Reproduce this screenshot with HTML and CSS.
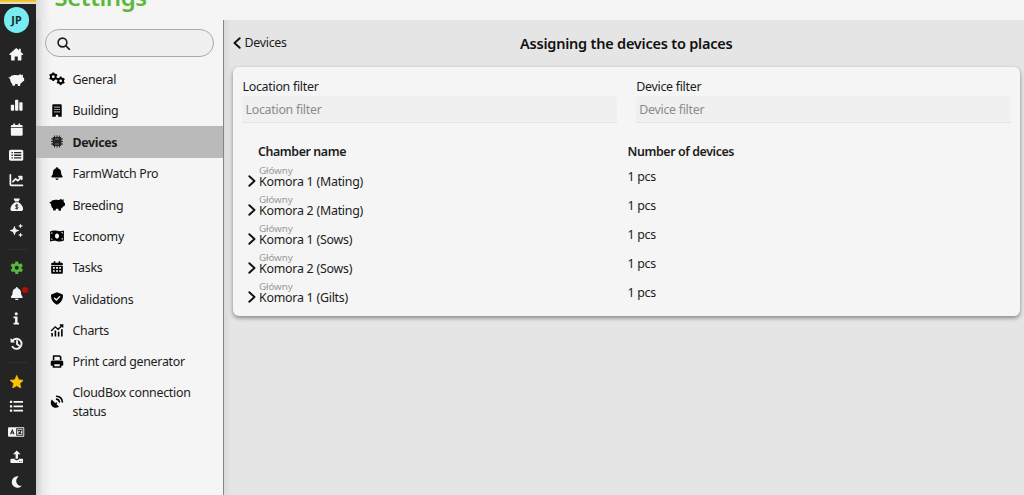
FILE: index.html
```html
<!DOCTYPE html>
<html lang="en">
<head>
<meta charset="utf-8">
<title>Settings</title>
<link rel="stylesheet" href="styles.css">
</head>
<body>
<svg class="sprite" aria-hidden="true">
  <symbol id="home" viewBox="0 0 16 16"><path d="M8 1 .5 7.8c-.5.5-.2 1 .4 1H2.3V14c0 .7.4 1 1 1h3v-4.500h3.400V15h3c.6 0 1-.3 1-1V8.800h1.400c.6 0 .9-.5.4-1L13 5.500V2h-2v1.700z"/></symbol>
  <symbol id="pig" viewBox="0 0 16 12"><path d="M.1 3.200C1 3.700 1.500 3.500 2 3 3 1.600 5 .9 7 1.100c1.500.1 2.600.2 3.600-.1L12.200 0l.7 1.200L14.800.6l-.3 1.900c.4.5.6 1 .7 1.500l.8.3v2.400l-1.500.9c-.6 1-1.500 1.600-2.300 1.900L11.800 12H9.700l-.5-1.900H7L6.500 11.800H4.300L3.900 9.700C2.800 8.900 2.100 7.400 1.900 5.500c-.1-.5-.4-.7-.8-.9C.5 4.300.2 3.800.1 3.200z"/></symbol>
  <symbol id="bars" viewBox="0 0 16 16"><rect x="1" y="8" width="3.900" height="7" rx="1"/><rect x="6" y="2" width="3.900" height="13" rx="1"/><rect x="11" y="5" width="3.900" height="10" rx="1"/></symbol>
  <symbol id="calendar" viewBox="0 0 16 16"><path d="M4 .5h2v2h4v-2h2v2h1.500c.8 0 1.500.6 1.500 1.500v1H1V4c0-.9.7-1.500 1.500-1.500H4zM1 6h14v7.500c0 .9-.7 1.500-1.500 1.500h-11C1.700 15 1 14.400 1 13.500z"/></symbol>
  <symbol id="listbox" viewBox="0 0 16 14"><path fill-rule="evenodd" d="M2 1h12c1.100 0 2 .8 2 1.800v8.400c0 1-.9 1.800-2 1.800H2c-1.100 0-2-.8-2-1.800V2.800C0 1.800.9 1 2 1zm.7 2.500v1.300h1.500V3.500zm2.800 0v1.300h8V3.500zM2.700 6.300v1.400h1.500V6.300zm2.800 0v1.400h8V6.300zM2.700 9.200v1.300h1.500V9.200zm2.800 0v1.300h8V9.200z"/></symbol>
  <symbol id="line" viewBox="0 0 16 16"><path class="stroke" d="M1.500 2v10.500q0 1.200 1.200 1.200H15M4.300 9.500l3-3 2.500 2L14 4.200M11 4h3v3"/></symbol>
  <symbol id="bag" viewBox="0 0 16 16"><path fill-rule="evenodd" d="M5 .5h6c.6 0 .8.5.5 1L10 4H6L4.500 1.500C4.200 1 4.400.5 5 .5zM6 5h4c3.500 2.300 5.500 5 5.500 8 0 1.700-1 2.500-2.500 2.500H3C1.500 15.500.5 14.700.5 13c0-3 2-5.700 5.500-8z"/><path class="cut" d="M9.800 8.500Q8 7.700 6.800 8.500c-1 1 0 1.600 1.200 1.800s2.200.8 1.300 1.900Q8 13 6.200 12.200M8 7v6.500"/></symbol>
  <symbol id="spark" viewBox="0 0 16 16"><path d="M6 3l1.600 3.800L11.500 8.400 7.600 10 6 13.900 4.400 10 .5 8.400l3.900-1.600zM12.700.5l.8 2 2 .8-2 .8-.8 2-.8-2-2-.8 2-.8zM12.700 10.500l.8 2 2 .8-2 .8-.8 1.900-.8-1.900-2-.8 2-.8z"/></symbol>
  <symbol id="gear" viewBox="0 0 16 16"><circle cx="8" cy="8" r="4" fill="none" stroke="currentColor" stroke-width="3.200"/><path fill="none" stroke="currentColor" stroke-width="3.600" d="M8 .6v3M8 12.400v3M1.600 4.300l2.600 1.500M11.800 10.200l2.600 1.500M1.600 11.700l2.600-1.500M11.800 5.800l2.600-1.500"/></symbol>
  <symbol id="bell" viewBox="0 0 448 512"><path d="M224 0c-17.700 0-32 14.300-32 32V51.200C119 66 64 130.600 64 208v18.800c0 47-17.300 92.400-48.500 127.600l-7.400 8.300c-8.400 9.400-10.400 22.900-5.300 34.400S19.400 416 32 416H416c12.600 0 24-7.400 29.200-18.900s3.100-25-5.300-34.400l-7.400-8.300C401.300 319.200 384 273.900 384 226.800V208c0-77.400-55-142-128-156.800V32c0-17.700-14.300-32-32-32zm45.300 493.300c12-12 18.700-28.300 18.700-45.300H160c0 17 6.700 33.300 18.700 45.300s28.300 18.700 45.300 18.700 33.300-6.700 45.300-18.700z"/></symbol>
  <symbol id="info" viewBox="0 0 16 16"><circle cx="8" cy="3" r="1.700"/><path d="M5 6h4.400v7H11v2H5v-2h1.700V8H5z"/></symbol>
  <symbol id="history" viewBox="0 0 16 16"><path class="stroke bold" d="M3 4.300a6 6 0 1 1-.1 7.300M8.300 4.800v3.500l2.400 1.900"/><path d="M.7 1.300v5.300H6z"/></symbol>
  <symbol id="star" viewBox="2 1.500 20 20"><path stroke="currentColor" stroke-linejoin="round" d="M12 17.270 18.180 21l-1.640-7.030L22 9.240l-7.190-.61L12 2 9.190 8.630 2 9.240l5.460 4.730L5.820 21z"/></symbol>
  <symbol id="list" viewBox="0 0 16 16"><path d="M1 2h2.500v2.500H1zM5 2.300h10.500v1.900H5zM1 6.800h2.500v2.500H1zM5 7.100h10.500V9H5zM1 11.600h2.500v2.500H1zM5 11.900h10.500v1.900H5z"/></symbol>
  <symbol id="lang" viewBox="0 0 18 12"><rect y=".8" width="18" height="10.400" rx="1.300"/><path class="cut" d="M2.800 8.500 4.700 3.800l1.900 4.700M3.500 7h2.400M9.500 2.500h6.700v7H9.500zM10.700 4.400H15M12.900 3.500v1M11.200 8q2.800-1 3-3.500M11.500 5.500q1 2 3.200 2.500"/></symbol>
  <symbol id="upload" viewBox="0 0 16 16"><path d="M8 .5 12.500 5H9.400v5.500H6.600V5H3.500zM1.500 10.500h3.800c.2 1 1.200 1.500 2.700 1.500s2.500-.5 2.700-1.500h3.800c.6 0 1 .4 1 1v3c0 .6-.4 1-1 1h-13c-.6 0-1-.4-1-1v-3c0-.6.4-1 1-1z"/><path class="cut" d="M10.700 13.700h.9M12.800 13.700h.9"/></symbol>
  <symbol id="moon" viewBox="0 0 16 16"><path d="M8.800 1.500A6.800 6.800 0 1 0 14 12.800C8 13.700 4.800 6.200 10 2.200c.5-.3-.5-.7-1.200-.7z"/></symbol>
  <symbol id="gears" viewBox="0 0 16 13"><g fill="none" stroke="currentColor"><circle cx="4.300" cy="4.500" r="2.400" stroke-width="2"/><circle cx="11.700" cy="8.600" r="2.400" stroke-width="2"/><path stroke-width="1.900" d="M4.300.2v2M4.300 6.800v2M.6 2.300l1.700 1M6.300 5.700l1.700 1M.6 6.700l1.700-1M6.300 3.300l1.700-1M11.700 4.300v2M11.700 10.900v2M8 6.400l1.700 1M13.700 9.800l1.700 1M8 10.800l1.700-1M13.700 7.400l1.700-1"/></g></symbol>
  <symbol id="building" viewBox="0 0 14 16"><path fill-rule="evenodd" d="M2.600.3h8.800c.8 0 1.400.6 1.400 1.300v14H8.500v-2.500h-3v2.500H1.200v-14C1.200.9 1.800.3 2.600.3zM3.800 3v1.500h1.500V3zm2.500 0v1.500h1.500V3zm2.500 0v1.500h1.500V3zm-5 3v1.500h1.500V6zm2.500 0v1.500h1.500V6zm2.500 0v1.500h1.500V6zm-5 3v1.400h1.500V9zm2.500 0v1.400h1.500V9zm2.500 0v1.400h1.500V9z"/></symbol>
  <symbol id="chip" viewBox="0 0 16 16"><path fill="none" stroke="currentColor" stroke-width="1.300" d="M5 .7v14.600M8 .7v2m0 10.600v2M11 .7v14.600M.7 5h14.600M.7 8h2m10.600 0h2M.7 11h14.600"/><path fill-rule="evenodd" d="M4 2.500h8c.8 0 1.500.7 1.500 1.500v8c0 .8-.7 1.500-1.500 1.500H4c-.8 0-1.500-.7-1.500-1.500V4c0-.8.7-1.500 1.500-1.500zm.4 1.900v7.200h7.200V4.400zm1 1h5.200v5.200H5.400z"/></symbol>
  <symbol id="money" viewBox="0 0 16 13"><path fill-rule="evenodd" d="M.5 1.500C3 .3 5.500.3 8 .9s5 .5 7.500-.4v11c-2.500 1.200-5 1.200-7.500.6s-5-.5-7.500.4zM8 3.700c-1.300 0-2.200 1.200-2.200 2.800S6.700 9.300 8 9.300s2.200-1.200 2.200-2.800S9.300 3.700 8 3.700zM1.800 2.700v1.600c.9 0 1.400-.6 1.500-1.600zm12.400 7.500V8.600c-.9 0-1.400.6-1.500 1.600zM1.800 10.600h1.500c-.1-.8-.6-1.400-1.500-1.400zM14.200 2.200l-1.500.2c.1.800.7 1.400 1.500 1.400z"/></symbol>
  <symbol id="schedule" viewBox="0 0 16 16"><path fill-rule="evenodd" d="M4 .3h2v2h4v-2h2v2h1.700c.8 0 1.500.6 1.500 1.500v1H.8v-1c0-.9.700-1.500 1.500-1.500H4zM.8 5.800h14.400v8.200c0 .9-.7 1.600-1.500 1.600H2.300c-.8 0-1.500-.7-1.500-1.600zM3 7.500v2h2.300v-2zm3.800 0v2h2.400v-2zm3.900 0v2H13v-2zM3 11.300v2h2.300v-2zm3.800 0v2h2.400v-2zm3.900 0v2H13v-2z"/></symbol>
  <symbol id="shield" viewBox="0 0 16 16"><path d="m8 .2 6.400 2.500c.6.2 1 .7 1 1.300 0 5-2.200 9.500-7.400 11.800C2.800 13.500.6 9 .6 4c0-.6.4-1.100 1-1.300z"/><path class="check" d="m5 7.700 2.200 2.200 4-4.200"/></symbol>
  <symbol id="trend" viewBox="0 0 16 16"><path fill="none" stroke="currentColor" stroke-width="1.700" d="m.8 8.500 5-5 3.500 3L15 1.300M11.500 1.300H15v3"/><path fill="none" stroke="currentColor" stroke-width="2" d="M2 11v4.500M6 8v7.500M10 9.500v6M14 6.500v9"/></symbol>
  <symbol id="print" viewBox="0 0 16 16"><path fill-rule="evenodd" d="M3.500.3h8l2 2V6h-2V3L10.800 2.300h-6V6h-2V1.800c0-.8.2-1.500.7-1.500zM2.300 6.800h11.400c1.200 0 2 .9 2 2v3.500c0 .6-.4 1-1 1h-1.400v2.400H2.700v-2.400H1.300c-.6 0-1-.4-1-1V8.800c0-1.100.8-2 2-2zM4.700 11.500v2.300h6.600v-2.300z"/></symbol>
  <symbol id="dish" viewBox="0 0 16 16"><path d="M1.500 5.500 5.800 9.800l1.500-.9 1 1-.9 1.500 3.200 3.200C7 16.500 3.500 16 1.700 13.600-.1 11.200-.1 8 1.500 5.500z"/><path fill="none" stroke="currentColor" stroke-width="2" stroke-linecap="round" d="M7.500 1.500c4 .3 6.800 3.100 7.100 7.100M7.500 5.100c2 .3 3.200 1.500 3.500 3.500"/></symbol>
  <symbol id="search" viewBox="0 0 16 16"><circle cx="6.500" cy="6.500" r="5.200" fill="none" stroke="currentColor" stroke-width="1.900"/><path class="stroke" d="m10.300 10.300 4.700 4.700"/></symbol>
  <symbol id="left" viewBox="0 0 8 12"><path class="stroke" d="M6.700 1.200 1.500 6l5.200 4.800"/></symbol>
  <symbol id="right" viewBox="0 0 8 12"><path class="stroke" d="M1.300 1.200 6.500 6l-5.200 4.800"/></symbol>
</svg>
<div class="app">
  <div class="topline"></div>
  <nav class="rail">
    <div class="avatar">JP</div>
    <a class="tool"><svg class="i"><use href="#home"/></svg></a>
    <a class="tool"><svg class="i wide"><use href="#pig"/></svg></a>
    <a class="tool"><svg class="i small"><use href="#bars"/></svg></a>
    <a class="tool"><svg class="i small"><use href="#calendar"/></svg></a>
    <a class="tool"><svg class="i"><use href="#listbox"/></svg></a>
    <a class="tool"><svg class="i"><use href="#line"/></svg></a>
    <a class="tool"><svg class="i small"><use href="#bag"/></svg></a>
    <a class="tool"><svg class="i"><use href="#spark"/></svg></a>
    <div class="rule"></div>
    <a class="tool green"><svg class="i small"><use href="#gear"/></svg></a>
    <a class="tool"><svg class="i small"><use href="#bell"/></svg><span class="dot"></span></a>
    <a class="tool"><svg class="i"><use href="#info"/></svg></a>
    <a class="tool"><svg class="i small"><use href="#history"/></svg></a>
    <div class="rule"></div>
    <a class="tool gold"><svg class="i small"><use href="#star"/></svg></a>
    <a class="tool"><svg class="i"><use href="#list"/></svg></a>
    <a class="tool"><svg class="i wide"><use href="#lang"/></svg></a>
    <a class="tool"><svg class="i small"><use href="#upload"/></svg></a>
    <a class="tool"><svg class="i small"><use href="#moon"/></svg></a>
  </nav>
  <div class="page">
    <header class="heading"><h1>Settings</h1></header>
    <div class="columns">
      <aside class="menu">
        <div class="search"><svg><use href="#search"/></svg></div>
        <a class="item"><svg class="mi large"><use href="#gears"/></svg><span>General</span></a>
        <a class="item"><svg class="mi"><use href="#building"/></svg><span>Building</span></a>
        <a class="item active"><svg class="mi"><use href="#chip"/></svg><span>Devices</span></a>
        <a class="item"><svg class="mi"><use href="#bell"/></svg><span>FarmWatch Pro</span></a>
        <a class="item"><svg class="mi large"><use href="#pig"/></svg><span>Breeding</span></a>
        <a class="item"><svg class="mi large money"><use href="#money"/></svg><span>Economy</span></a>
        <a class="item"><svg class="mi"><use href="#schedule"/></svg><span>Tasks</span></a>
        <a class="item"><svg class="mi"><use href="#shield"/></svg><span>Validations</span></a>
        <a class="item"><svg class="mi"><use href="#trend"/></svg><span>Charts</span></a>
        <a class="item"><svg class="mi"><use href="#print"/></svg><span>Print card generator</span></a>
        <a class="item"><svg class="mi"><use href="#dish"/></svg><span>CloudBox connection status</span></a>
      </aside>
      <main class="content">
        <div class="bar">
          <a class="back"><svg class="chev"><use href="#left"/></svg><span>Devices</span></a>
          <h2>Assigning the devices to places</h2>
        </div>
        <section class="card">
          <div class="filters">
            <label><span>Location filter</span><input placeholder="Location filter"></label>
            <label><span>Device filter</span><input placeholder="Device filter"></label>
          </div>
          <div class="table">
            <div class="row head"><b>Chamber name</b><b>Number of devices</b></div>
            <div class="row"><div class="place"><svg class="chev"><use href="#right"/></svg><div><small>Główny</small><span>Komora 1 (Mating)</span></div></div><span>1 pcs</span></div>
            <div class="row"><div class="place"><svg class="chev"><use href="#right"/></svg><div><small>Główny</small><span>Komora 2 (Mating)</span></div></div><span>1 pcs</span></div>
            <div class="row"><div class="place"><svg class="chev"><use href="#right"/></svg><div><small>Główny</small><span>Komora 1 (Sows)</span></div></div><span>1 pcs</span></div>
            <div class="row"><div class="place"><svg class="chev"><use href="#right"/></svg><div><small>Główny</small><span>Komora 2 (Sows)</span></div></div><span>1 pcs</span></div>
            <div class="row"><div class="place"><svg class="chev"><use href="#right"/></svg><div><small>Główny</small><span>Komora 1 (Gilts)</span></div></div><span>1 pcs</span></div>
          </div>
        </section>
      </main>
    </div>
  </div>
</div>
</body>
</html>
```
FILE: styles.css
```css
* { box-sizing: border-box; }
body { margin: 0; background: #f5f5f5; color: #1c1c1c; font: 12.4px/18.5px "Noto Sans", "Open Sans", sans-serif; letter-spacing: -0.28px; }
svg { display: block; fill: currentColor; flex: none; }
.sprite { position: absolute; width: 0; height: 0; }
.stroke { fill: none; stroke: currentColor; stroke-width: 1.9; stroke-linecap: round; stroke-linejoin: round; }
.bold { stroke-width: 2.2; }
.cut { fill: none; stroke: #242424; stroke-width: 1.1; }
.check { fill: none; stroke: #f5f5f5; stroke-width: 1.7; stroke-linecap: round; }
.app { display: grid; grid-template: 3px 492px / 35.5px 1fr; width: 1024px; height: 495px; overflow: hidden; }
.topline { background: linear-gradient(#f6c012 1px, #e9cf80 2px, #e5e5e5 3px); }
.rail { grid-row: 2; background: #242424; border-top: 1px solid #ddd; color: #f5f5f5; display: flex; flex-direction: column; align-items: center; padding: 3px 2.500px 0 0; }
.avatar { width: 25.5px; height: 25.5px; border-radius: 50%; background: #78edf4; color: #142a2c; font-weight: 700; font-size: 10.8px; line-height: 25px; text-align: center; letter-spacing: 0; margin-bottom: 9.500px; flex: none; }
.tool { height: 25.1px; width: 24px; display: flex; align-items: center; justify-content: center; position: relative; flex: none; }
.i { width: 14.5px; height: 14.5px; }
.i.small { width: 13.5px; height: 13.5px; }
.i.wide { width: 16.5px; height: 12px; }
.rule { height: 12.9px; width: 20px; flex: none; background: linear-gradient(#303030, #303030) center / 100% 1px no-repeat; }
.green { color: #5cb83c; }
.gold { color: #fdc204; }
.dot { position: absolute; width: 6px; height: 6px; right: 1px; top: 6px; border-radius: 50%; background: #b80d08; }
.page { grid-row: 1 / 3; grid-column: 2; display: flex; flex-direction: column; min-width: 0; }
.heading { height: 20px; flex: none; background: linear-gradient(90deg, #dadada, #f5f5f5 14px); }
h1 { margin: -18px 0 0 19px; font-size: 24px; line-height: 30px; color: #5cb83c; font-weight: 600; letter-spacing: -0.45px; }
.columns { display: flex; flex: 1; }
.menu { width: 188px; flex: none; border-right: 1px solid #858585; background: linear-gradient(90deg, #cfcfcf, #ebebeb 7px, #f5f5f5 16px); padding-top: 9px; }
.search { margin: 0 8.500px 7px 9px; height: 27.500px; border: 1px solid #aaa; border-radius: 14px; background: #f0f0f0; padding: 6.500px 11.500px; }
.search svg { width: 13.5px; height: 13.5px; }
.item { display: flex; align-items: center; gap: 7.5px; min-height: 31.4px; padding: 6px 15px 6px 13.5px; }
.item span { flex: 1; padding-top: 1px; margin-bottom: -1px; }
.mi { width: 16px; height: 13px; color: #050505; }
.mi.large { height: 13.5px; }
.mi.money { height: 12px; }
.active { background: #bababa; font-weight: 700; letter-spacing: -0.32px; }
.active .mi { color: #242424; }
.content { flex: 1; background: linear-gradient(90deg, #dadada, #e5e5e5 7px); padding: 0 4px 0 9px; min-width: 0; }
.bar { display: grid; grid-template-columns: 1fr auto 1fr; align-items: center; height: 47px; padding-bottom: 1px; }
.back { display: flex; align-items: center; gap: 4px; }
.back span { padding-top: 1px; }
.chev { width: 8px; height: 12px; color: #111; }
h2 { margin: 0; font-size: 14.5px; font-weight: 600; letter-spacing: -0.22px; color: #111; }
.card { height: 249px; border-radius: 6px; background: #f5f5f5; box-shadow: 0 2px 4px #0000006b; padding: 11px 9.5px 0; }
.filters { display: grid; grid-template-columns: 1fr 1fr; gap: 19px; }
.filters span { display: block; height: 18px; padding-left: .5px; }
input { display: block; width: 100%; height: 27px; border: 0; border-bottom: 1px solid #e4e4e4; border-radius: 4px 4px 0 0; background: #f0f0f0; padding: 0 3.500px; font: inherit; letter-spacing: inherit; }
input::placeholder { color: #8b8b8b; opacity: 1; }
.table { padding: 20px 7px 0 6px; }
.row { display: grid; grid-template-columns: 379.500px 1fr; height: 29.1px; }
.row > span { padding-top: 5px; }
.head { height: 20px; }
.head b { font-weight: 600; letter-spacing: -0.4px; }
.head b:first-child { padding-left: 10px; }
.place { display: flex; gap: 3px; align-items: flex-start; }
.place .chev { margin-top: 11.500px; }
.place small, .place span { display: block; }
.place small { font-size: 9.800px; line-height: 11px; color: #999; letter-spacing: -0.1px; padding-top: 1px; }
.place > div { margin-top: 1px; }
.place span { line-height: 11px; letter-spacing: -0.24px; }
```
